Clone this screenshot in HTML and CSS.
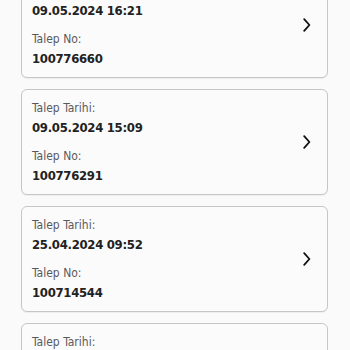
FILE: index.html
```html
<!DOCTYPE html>
<html lang="tr">
<head>
<meta charset="utf-8">
<link rel="stylesheet" href="styles.css">
</head>
<body>
<div class="list">
  <div class="card">
    <div class="info">
      <div class="label">Talep Tarihi:</div>
      <div class="value">09.05.2024 16:21</div>
      <div class="label second">Talep No:</div>
      <div class="value">100776660</div>
    </div>
    <svg class="chev" width="8" height="14" viewBox="0 0 8 14"><path d="M1.2 1.2 L6.4 7 L1.2 12.8" fill="none" stroke="#111" stroke-width="1.8" stroke-linecap="round" stroke-linejoin="round"/></svg>
  </div>
  <div class="card">
    <div class="info">
      <div class="label">Talep Tarihi:</div>
      <div class="value">09.05.2024 15:09</div>
      <div class="label second">Talep No:</div>
      <div class="value">100776291</div>
    </div>
    <svg class="chev" width="8" height="14" viewBox="0 0 8 14"><path d="M1.2 1.2 L6.4 7 L1.2 12.8" fill="none" stroke="#111" stroke-width="1.8" stroke-linecap="round" stroke-linejoin="round"/></svg>
  </div>
  <div class="card">
    <div class="info">
      <div class="label">Talep Tarihi:</div>
      <div class="value">25.04.2024 09:52</div>
      <div class="label second">Talep No:</div>
      <div class="value">100714544</div>
    </div>
    <svg class="chev" width="8" height="14" viewBox="0 0 8 14"><path d="M1.2 1.2 L6.4 7 L1.2 12.8" fill="none" stroke="#111" stroke-width="1.8" stroke-linecap="round" stroke-linejoin="round"/></svg>
  </div>
  <div class="card">
    <div class="info">
      <div class="label">Talep Tarihi:</div>
      <div class="value">24.04.2024 11:18</div>
      <div class="label second">Talep No:</div>
      <div class="value">100709812</div>
    </div>
    <svg class="chev" width="8" height="14" viewBox="0 0 8 14"><path d="M1.2 1.2 L6.4 7 L1.2 12.8" fill="none" stroke="#111" stroke-width="1.8" stroke-linecap="round" stroke-linejoin="round"/></svg>
  </div>
</div>
</body>
</html>
```
FILE: styles.css
```css
html, body {
  margin: 0;
  padding: 0;
  background: #fafafa;
  overflow: hidden;
  height: 350px;
}
.list {
  display: flex;
  flex-direction: column;
  gap: 11px;
  margin: -28px 22px 0 21px;
}
.card {
  display: flex;
  align-items: center;
  justify-content: space-between;
  box-sizing: border-box;
  height: 106px;
  padding: 11px 16px 11px 10px;
  border: 1px solid #c6c6c6;
  border-radius: 6px;
  background: #fbfbfb;
  box-shadow: 0 1px 1px rgba(0,0,0,0.05);
}
.info {
  display: flex;
  flex-direction: column;
  align-self: flex-start;
}
.label {
  font-family: "DejaVu Sans Condensed", "DejaVu Sans", sans-serif;
  font-stretch: condensed;
  font-size: 12px;
  line-height: 15px;
  color: #5a5a5a;
  margin-bottom: 4px;
}
.label.second {
  margin-top: 14px;
}
.value {
  font-family: "DejaVu Sans Condensed", "DejaVu Sans", sans-serif;
  font-stretch: condensed;
  font-weight: bold;
  font-size: 13px;
  line-height: 15px;
  letter-spacing: -0.3px;
  color: #222;
}
.chev {
  display: block;
  flex: none;
}
```
